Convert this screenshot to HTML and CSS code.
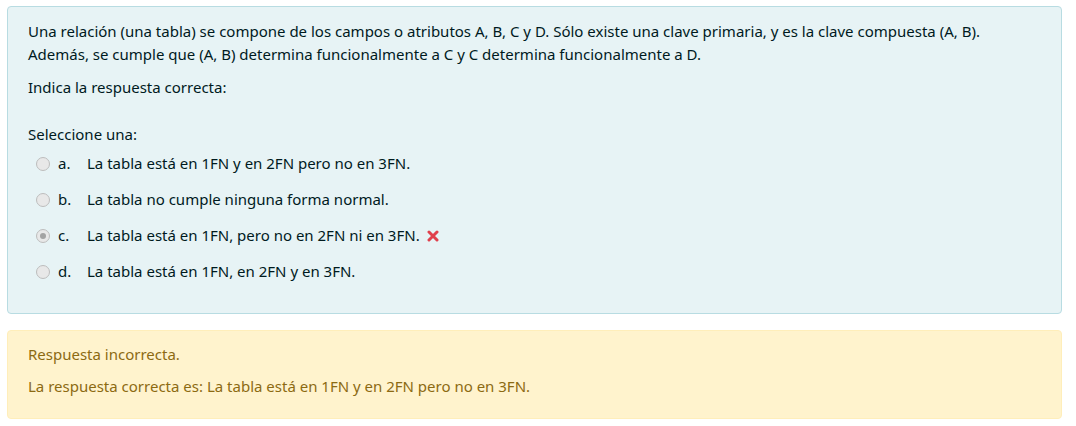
FILE: index.html
```html
<!DOCTYPE html>
<html lang="es">
<head>
<meta charset="utf-8">
<link rel="stylesheet" href="styles.css">
</head>
<body>
<div class="page">
  <div class="formulation">
    <div class="qtext">
      <p>Una relación (una tabla) se compone de los campos o atributos A, B, C y D. Sólo existe una clave primaria, y es la clave compuesta (A, B). Además, se cumple que (A, B) determina funcionalmente a C y C determina funcionalmente a D.</p>
      <p>Indica la respuesta correcta:</p>
    </div>
    <div class="ablock">
      <div class="prompt">Seleccione una:</div>
      <div class="answer">
        <div class="opt"><span class="radio"></span><span class="num">a.</span><span class="lbl">La tabla está en 1FN y en 2FN pero no en 3FN.</span></div>
        <div class="opt"><span class="radio"></span><span class="num">b.</span><span class="lbl">La tabla no cumple ninguna forma normal.</span></div>
        <div class="opt"><span class="radio checked"></span><span class="num">c.</span><span class="lbl">La tabla está en 1FN, pero no en 2FN ni en 3FN.</span><svg class="wrong" viewBox="0 0 12 12" width="12" height="12" aria-label="Incorrecta"><path d="M2 2L10 10M10 2L2 10" stroke="#e0404c" stroke-width="3" stroke-linecap="round"/></svg></div>
        <div class="opt"><span class="radio"></span><span class="num">d.</span><span class="lbl">La tabla está en 1FN, en 2FN y en 3FN.</span></div>
      </div>
    </div>
  </div>
  <div class="outcome">
    <div class="fb">Respuesta incorrecta.</div>
    <div class="fb">La respuesta correcta es: La tabla está en 1FN y en 2FN pero no en 3FN.</div>
  </div>
</div>
</body>
</html>
```
FILE: styles.css
```css
html, body {
  margin: 0;
  padding: 0;
  background: #ffffff;
}
body {
  font-family: "Noto Sans", "Open Sans", sans-serif;
  font-size: 15px;
  line-height: 22.5px;
  color: #001a1e;
}
.page {
  padding: 6px 14px 0 7px;
}
.formulation {
  background: #e7f3f5;
  border: 1px solid #b8dce2;
  border-radius: 4px;
  padding: 13px 20px 24px 20px;
}
.qtext p {
  margin: 0 0 11px 0;
}
.qtext {
  margin-bottom: 24px;
}
.qtext p:last-child {
  margin-bottom: 0;
}
.opt {
  display: flex;
  align-items: center;
  padding: 6.75px 0 6.75px 8px;
}
.radio {
  box-sizing: border-box;
  width: 14px;
  height: 14px;
  border-radius: 50%;
  border: 1px solid #bdbdbd;
  background: #e8e8e8;
  margin-top: 1px;
  margin-right: 8px;
  flex: none;
  display: flex;
  align-items: center;
  justify-content: center;
}
.radio.checked::after {
  content: "";
  width: 6px;
  height: 6px;
  border-radius: 50%;
  background: #a3a3a3;
}
.num {
  width: 29px;
  flex: none;
}
.wrong {
  margin-left: 7px;
  margin-top: 2px;
  flex: none;
}
.outcome {
  margin-top: 16px;
  background: #fff3cd;
  border: 1px solid #ffeeba;
  border-radius: 4px;
  padding: 12px 20px 12px 20px;
  color: #8c6a12;
}
.fb {
  margin-bottom: 9px;
}
```
